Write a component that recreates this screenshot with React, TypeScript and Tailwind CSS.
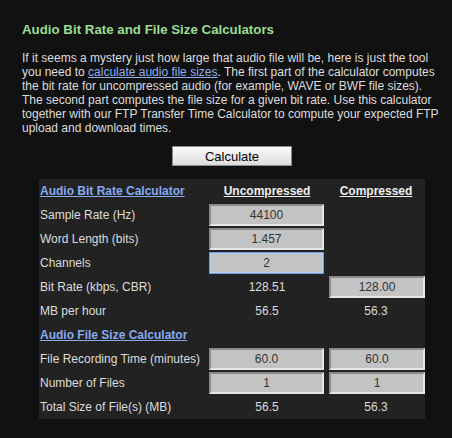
import React from "react";

const font = { fontFamily: '"Liberation Sans", Arial, sans-serif' };

function Field({
  value,
  wide = true,
  focused = false,
}: {
  value: string;
  wide?: boolean;
  focused?: boolean;
}) {
  const size = wide ? "w-[115px]" : "w-[98px]";
  const border = focused
    ? "border border-[#6f9be0] shadow-[inset_0_0_0_1px_#b9cdee]"
    : "border-2 border-t-[#8a8a8a] border-l-[#8a8a8a] border-b-[#e6e6e6] border-r-[#e6e6e6]";
  return (
    <div
      className={`${size} ${border} ml-[2px] h-[22px] bg-[#c3c3c3] text-[#333] text-[12px] flex items-center justify-center`}
    >
      {value}
    </div>
  );
}

export default function App() {
  const cell = "h-[24px] flex items-center";
  const mid = "h-[24px] flex items-center justify-center";

  return (
    <div className="w-[452px] h-[438px] bg-[#111] text-[#ddd] overflow-hidden" style={font}>
      <div className="w-[420px] ml-[22px] pt-[21px]">
        <h3 className="text-[13.3px] font-bold leading-[17px] text-[#98de92]">
          Audio Bit Rate and File Size Calculators
        </h3>

        <p className="mt-[13px] text-[12px] leading-[14px]">
          If it seems a mystery just how large that audio file will be, here is just the tool
          you need to{" "}
          <a href="#" className="underline text-[#8fb0f0]">
            calculate audio file sizes
          </a>
          . The first part of the calculator computes the bit rate for uncompressed audio (for
          example, WAVE or BWF file sizes). The second part computes the file size for a given
          bit rate. Use this calculator together with our FTP Transfer Time Calculator to
          compute your expected FTP upload and download times.
        </p>

        <div className="flex justify-center mt-[11px]">
          <button className="w-[120px] h-[20px] border border-[#8c8c8c] bg-gradient-to-b from-[#fbfbfb] to-[#dcdcdc] text-black text-[13px] leading-none">
            Calculate
          </button>
        </div>

        {/* calculator table */}
        <div className="mt-[13px] ml-[17px] w-[386px] bg-[#222] text-[12px] grid grid-cols-[168px_120px_98px]">
          <div className={`${cell} pl-[1px]`}>
            <a href="#" className="font-bold underline text-[#86aaf2]">
              Audio Bit Rate Calculator
            </a>
          </div>
          <div className={`${mid} font-bold underline text-[#eee]`}>Uncompressed</div>
          <div className={`${mid} font-bold underline text-[#eee]`}>Compressed</div>

          <div className={`${cell} pl-[1px]`}>Sample Rate (Hz)</div>
          <div className={cell}>
            <Field value="44100" />
          </div>
          <div className={cell} />

          <div className={`${cell} pl-[1px]`}>Word Length (bits)</div>
          <div className={cell}>
            <Field value="1.457" />
          </div>
          <div className={cell} />

          <div className={`${cell} pl-[1px]`}>Channels</div>
          <div className={cell}>
            <Field value="2" focused />
          </div>
          <div className={cell} />

          <div className={`${cell} pl-[1px]`}>Bit Rate (kbps, CBR)</div>
          <div className={mid}>128.51</div>
          <div className={cell}>
            <Field value="128.00" wide={false} />
          </div>

          <div className={`${cell} pl-[1px]`}>MB per hour</div>
          <div className={mid}>56.5</div>
          <div className={mid}>56.3</div>

          <div className={`${cell} pl-[1px] col-span-3`}>
            <a href="#" className="font-bold underline text-[#86aaf2]">
              Audio File Size Calculator
            </a>
          </div>

          <div className={`${cell} pl-[1px] whitespace-nowrap`}>File Recording Time (minutes)</div>
          <div className={cell}>
            <Field value="60.0" />
          </div>
          <div className={cell}>
            <Field value="60.0" wide={false} />
          </div>

          <div className={`${cell} pl-[1px]`}>Number of Files</div>
          <div className={cell}>
            <Field value="1" />
          </div>
          <div className={cell}>
            <Field value="1" wide={false} />
          </div>

          <div className={`${cell} pl-[1px]`}>Total Size of File(s) (MB)</div>
          <div className={mid}>56.5</div>
          <div className={mid}>56.3</div>
        </div>
      </div>
    </div>
  );
}
